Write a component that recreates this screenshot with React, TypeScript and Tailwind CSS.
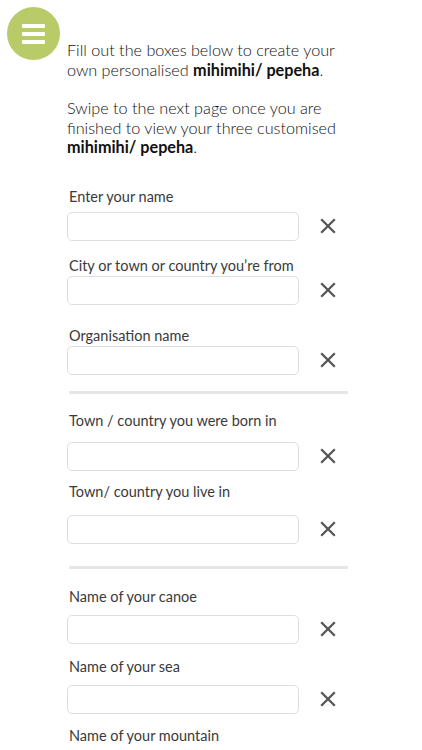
import { useState } from 'react';

interface Field {
  label: string;
  mt: string;
  gap: string;
}

const groups: Field[][] = [
  [
    { label: 'Enter your name', mt: 'mt-[30px]', gap: 'mt-[5px]' },
    { label: 'City or town or country you\u2019re from', mt: 'mt-[15px]', gap: 'mt-0' },
    { label: 'Organisation name', mt: 'mt-[21px]', gap: 'mt-0' },
  ],
  [
    { label: 'Town / country you were born in', mt: 'mt-[17px]', gap: 'mt-[11px]' },
    { label: 'Town/ country you live in', mt: 'mt-[11px]', gap: 'mt-[13px]' },
  ],
  [
    { label: 'Name of your canoe', mt: 'mt-[18px]', gap: 'mt-[8px]' },
    { label: 'Name of your sea', mt: 'mt-[13px]', gap: 'mt-[8px]' },
    { label: 'Name of your mountain', mt: 'mt-[12px]', gap: 'mt-[8px]' },
  ],
];

const dividerGaps = ['', 'mt-[16px]', 'mt-[22px]'];

function ClearIcon() {
  return (
    <svg width="16" height="16" viewBox="0 0 16 16" className="shrink-0">
      <path d="M1.2 1.2 L14.8 14.8 M14.8 1.2 L1.2 14.8" stroke="#555" strokeWidth="2.3" strokeLinecap="butt" />
    </svg>
  );
}

function FieldRow({ field }: { field: Field }) {
  const [value, setValue] = useState('');
  return (
    <div className={field.mt}>
      <label className="block pl-[2px] text-[14.5px] leading-[20px] text-[#3a3a3a]">{field.label}</label>
      <div className={`flex items-center ${field.gap}`}>
        <input
          value={value}
          onChange={(e) => setValue(e.target.value)}
          className="h-[29px] w-[232px] rounded-[5px] border border-[#dedede] bg-white px-2 text-[14px] outline-none"
        />
        <button onClick={() => setValue('')} className="ml-[20px] flex h-[29px] w-[18px] items-center justify-center">
          <ClearIcon />
        </button>
      </div>
    </div>
  );
}

export default function App() {
  return (
    <div className="relative min-h-[750px] bg-white font-['Lato','Liberation_Sans',sans-serif]">
      <button className="absolute left-[7px] top-[7px] flex h-[53px] w-[53px] flex-col items-center justify-center gap-[4px] rounded-full bg-[#b9cb68]">
        <span className="block h-[4px] w-[23px] rounded-[1px] bg-white" />
        <span className="block h-[4px] w-[23px] rounded-[1px] bg-white" />
        <span className="block h-[4px] w-[23px] rounded-[1px] bg-white" />
      </button>

      <div className="pl-[67px] pt-[40px]">
        <div className="text-[16.2px] font-light leading-[19.5px] text-[#111]">
          <p>
            Fill out the boxes below to create your<br />
            own personalised <b className="font-bold text-[#111]">mihimihi/ pepeha</b>.
          </p>
          <p className="mt-[19px]">
            Swipe to the next page once you are<br />
            finished to view your three customised<br />
            <b className="font-bold text-[#111]">mihimihi/ pepeha</b>.
          </p>
        </div>

        {groups.map((group, gi) => (
          <div key={gi}>
            {gi > 0 && <div className={`${dividerGaps[gi]} ml-[2px] h-[3px] w-[279px] bg-[#e6e6e6]`} />}
            {group.map((f) => (
              <FieldRow key={f.label} field={f} />
            ))}
          </div>
        ))}
      </div>
    </div>
  );
}
